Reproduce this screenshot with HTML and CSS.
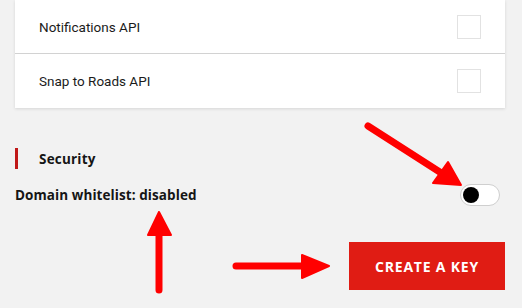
FILE: index.html
```html
<!DOCTYPE html>
<html>
<head>
<meta charset="utf-8">
<link rel="stylesheet" href="styles.css">
</head>
<body>
<div class="page">
  <div class="card">
    <div class="row">
      <span class="row-label">Notifications API</span>
      <span class="check"></span>
    </div>
    <div class="row">
      <span class="row-label">Snap to Roads API</span>
      <span class="check"></span>
    </div>
  </div>

  <div class="section-title">Security</div>

  <div class="domain">
    <span class="domain-label">Domain whitelist: disabled</span>
    <span class="toggle"><span class="knob"></span></span>
  </div>

  <div class="actions">
    <button class="create">CREATE A KEY</button>
  </div>

  <svg class="annot" width="522" height="308" viewBox="0 0 522 308">
    <g fill="#ff0000" stroke="#ff0000" stroke-linecap="round" stroke-linejoin="round">
      <line x1="368" y1="126" x2="446" y2="176" stroke-width="7"/>
      <polygon points="433,183 448,162 461,185" stroke-width="2"/>
      <line x1="159" y1="290" x2="159" y2="232" stroke-width="7"/>
      <polygon points="148,235 171,235 159,212" stroke-width="2"/>
      <line x1="236" y1="266" x2="305" y2="266" stroke-width="7"/>
      <polygon points="302,255 302,278 329,266" stroke-width="2"/>
    </g>
  </svg>
</div>
</body>
</html>
```

FILE: styles.css
```css
html, body {
  margin: 0;
  padding: 0;
  background: #f2f2f2;
}

.page {
  position: relative;
  width: 522px;
  height: 308px;
  overflow: hidden;
  padding: 0 17px 0 15px;
  box-sizing: border-box;
  font-family: Roboto, "Open Sans", sans-serif;
}

.card {
  background: #ffffff;
  box-shadow: 0 1px 3px rgba(0, 0, 0, 0.12);
}

.row {
  height: 53px;
  display: flex;
  align-items: center;
  justify-content: space-between;
  padding: 0 24px;
  box-sizing: border-box;
}

.row + .row {
  border-top: 1px solid #d2d2d2;
  height: 55px;
}

.row-label {
  font-size: 13.5px;
  color: #1b1b1b;
}

.check {
  width: 22px;
  height: 22px;
  border: 1px solid #e2e2e2;
}

.section-title {
  margin-top: 40px;
  height: 21px;
  border-left: 3px solid #c01818;
  padding-left: 21px;
  display: flex;
  align-items: center;
  font-family: "Open Sans", sans-serif;
  font-weight: 700;
  font-size: 13.5px;
  letter-spacing: 0.2px;
  color: #151515;
}

.domain {
  margin-top: 15px;
  height: 22px;
  display: flex;
  align-items: center;
  justify-content: space-between;
  padding-right: 5px;
}

.domain-label {
  font-family: "Open Sans", sans-serif;
  font-weight: 700;
  font-size: 13.5px;
  letter-spacing: 0.08px;
  color: #151515;
}

.toggle {
  width: 36px;
  height: 20px;
  border: 1px solid #cfcfcf;
  border-radius: 11px;
  background: #ffffff;
  display: flex;
  align-items: center;
  padding-left: 2px;
  box-sizing: content-box;
}

.knob {
  width: 16px;
  height: 16px;
  border-radius: 50%;
  background: #000000;
}

.actions {
  margin-top: 36px;
  display: flex;
  justify-content: flex-end;
}

.create {
  width: 156px;
  height: 48px;
  border: none;
  background: #e01c14;
  color: #ffffff;
  font-family: "Open Sans", sans-serif;
  font-weight: 700;
  font-size: 14px;
  letter-spacing: 0.8px;
  padding: 0;
}

.annot {
  position: absolute;
  left: 0;
  top: 0;
  pointer-events: none;
}
```
